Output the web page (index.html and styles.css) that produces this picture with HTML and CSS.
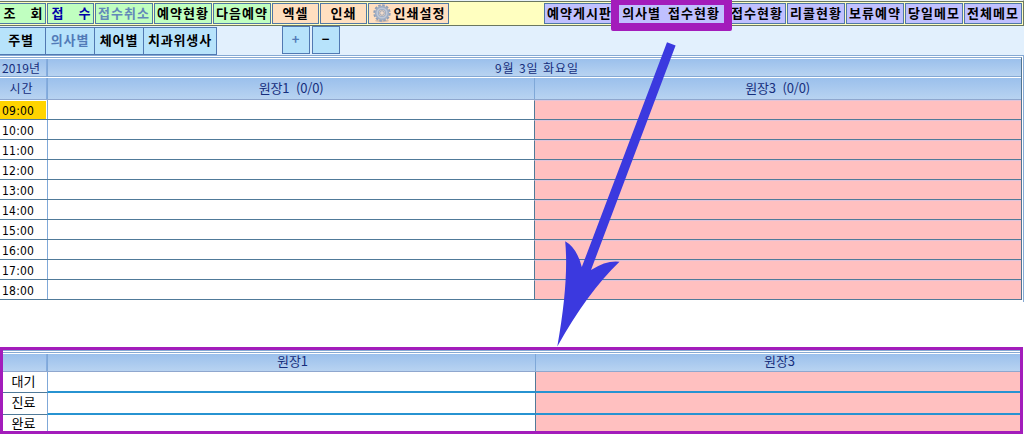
FILE: index.html
```html
<!DOCTYPE html>
<html lang="ko">
<head>
<meta charset="utf-8">
<title>예약현황</title>
<link rel="stylesheet" href="styles.css">
</head>
<body>
<div class="page">
  <header class="toolbar">
    <button class="btn green first">조<span class="gap"></span>회</button>
    <button class="btn green navy w47">접<span class="gap"></span>수</button>
    <button class="btn green muted">접수취소</button>
    <button class="btn green">예약현황</button>
    <button class="btn green">다음예약</button>
    <button class="btn peach w47">엑셀</button>
    <button class="btn peach w47">인쇄</button>
    <button class="btn peach setup">
      <svg class="gear" viewBox="0 0 20 20">
        <ellipse cx="10" cy="17.8" rx="7" ry="1.5" fill="#b9a59b" opacity=".6"/>
        <circle cx="10" cy="10" r="7.4" fill="none" stroke="#91a0b8" stroke-width="2.6" stroke-dasharray="2.5 1.37"/>
        <circle cx="10" cy="10" r="5.1" fill="none" stroke="#a0aec4" stroke-width="4.2"/>
        <circle cx="10" cy="10" r="4.8" fill="none" stroke="#c0c9d7" stroke-width="1.6"/>
        <circle cx="10" cy="10" r="2.3" fill="#f0dccd" stroke="#8998b0" stroke-width=".8"/>
      </svg>인쇄설정</button>
    <span class="spacer"></span>
    <button class="btn violet board">예약게시판</button>
    <button class="btn violet doctor">의사별<span class="space"></span>접수현황</button>
    <button class="btn violet">접수현황</button>
    <button class="btn violet">리콜현황</button>
    <button class="btn violet">보류예약</button>
    <button class="btn violet">당일메모</button>
    <button class="btn violet">전체메모</button>
  </header>
  <nav class="tabs">
    <button class="tab week">주별</button>
    <button class="tab muted">의사별</button>
    <button class="tab">체어별</button>
    <button class="tab hygienist">치과위생사</button>
    <button class="step plus">+</button>
    <button class="step">−</button>
  </nav>
  <main class="schedule">
    <div class="frame">
      <div class="row date"><div class="c1">2019년</div><div class="day">9월 3일 화요일</div></div>
      <div class="row names"><div class="c1">시간</div><div class="c2">원장1&nbsp; (0/0)</div><div class="c3">원장3&nbsp; (0/0)</div></div>
      <div class="row slot"><div class="c1 now">09:00</div><div class="c2"></div><div class="c3"></div></div>
      <div class="row slot"><div class="c1">10:00</div><div class="c2"></div><div class="c3"></div></div>
      <div class="row slot"><div class="c1">11:00</div><div class="c2"></div><div class="c3"></div></div>
      <div class="row slot"><div class="c1">12:00</div><div class="c2"></div><div class="c3"></div></div>
      <div class="row slot"><div class="c1">13:00</div><div class="c2"></div><div class="c3"></div></div>
      <div class="row slot"><div class="c1">14:00</div><div class="c2"></div><div class="c3"></div></div>
      <div class="row slot"><div class="c1">15:00</div><div class="c2"></div><div class="c3"></div></div>
      <div class="row slot"><div class="c1">16:00</div><div class="c2"></div><div class="c3"></div></div>
      <div class="row slot"><div class="c1">17:00</div><div class="c2"></div><div class="c3"></div></div>
      <div class="row slot"><div class="c1">18:00</div><div class="c2"></div><div class="c3"></div></div>
    </div>
  </main>
  <section class="status">
    <div class="srow head"><div class="s1"></div><div class="s2">원장1</div><div class="s3">원장3</div></div>
    <div class="srow wait"><div class="s1">대기</div><div class="s2"></div><div class="s3"></div></div>
    <div class="srow care"><div class="s1">진료</div><div class="s2"></div><div class="s3"></div></div>
    <div class="srow done"><div class="s1">완료</div><div class="s2"></div><div class="s3"></div></div>
  </section>
  <div class="highlight"></div>
  <svg class="arrow" viewBox="0 0 1024 434">
    <path fill="#3b39df" d="M667 42.3 L675.6 45.6 L591 270 Q607 260 619.5 261.8 Q587 293 557.3 346.5 Q569 281 565.2 241.3 Q577 248 581.8 267 Z"/>
  </svg>
</div>
</body>
</html>
```

FILE: styles.css
```css
* { box-sizing: border-box; }
body { margin: 0; background: #fff; }
button { appearance: none; margin: 0; padding: 0; border-radius: 0; font: inherit; color: inherit; }
.page {
  position: relative;
  width: 1024px;
  height: 434px;
  overflow: hidden;
  font: 12px/18px "Noto Sans CJK KR", sans-serif;
  color: #000;
}

.toolbar {
  display: flex;
  gap: 1px;
  height: 26px;
  padding-top: 1px;
  padding-right: 1px;
  border-top: 1px solid #e8f2fa;
  border-right: 1px solid #6b7760;
  background: linear-gradient(#6b7760 0 1px, #ffffc0 1px 24px, #6b7760 24px);
  font: bold 13px/17px "Noto Sans CJK KR", sans-serif;
}
.btn {
  display: flex;
  justify-content: center;
  align-items: center;
  width: 58px;
  height: 21px;
  margin-top: 1px;
  padding-bottom: 3px;
  border: 1px solid #5078a4;
  letter-spacing: 1px;
  white-space: nowrap;
  flex: none;
}
.green { background: #c0ffc0; }
.peach { background: #ffdfc0; }
.violet { background: #c0c0ff; }
.first { width: 46px; border-left: 0; padding-left: 2px; }
.w47 { width: 47px; }
.navy { color: #0000a8; padding-left: 2px; }
.muted { color: #6389b9; }
.gap { width: 14px; }
.space { width: 7px; }
.setup { width: 81px; }
.gear { width: 20px; height: 20px; margin: 2px 2px 0 0; flex: none; }
.spacer { flex: 1; }
.board { width: 71px; }
.doctor { width: 111px; padding-right: 1px; }

.tabs {
  display: flex;
  height: 29px;
  padding-top: 1px;
  background: #e2f0fd;
  font: bold 13px/17px "Noto Sans CJK KR", sans-serif;
}
.tab, .step {
  display: flex;
  justify-content: center;
  align-items: center;
  width: 50px;
  height: 28px;
  margin-right: -1px;
  padding-bottom: 3px;
  border: 1px solid #5179b2;
  background: #b7e3fb;
  letter-spacing: 0.8px;
}
.tab.muted { color: #527bb8; }
.week { width: 46px; border-left: 0; padding-right: 3px; }
.hygienist { width: 74px; }
.step { width: 28px; margin: -1px 2px 0 0; }
.plus { margin-left: 66px; color: #527bb8; }

.schedule {
  height: 247px;
  border-top: 1px solid #86a9d3;
  border-right: 1px solid #86a9d3;
  padding: 1px 1px 0 0;
}
.frame { border-top: 1px solid #86a9d3; border-right: 1px solid #527491; }
.row { display: grid; grid-template-columns: 47px 487px 487px; grid-template-rows: 100%; }
.row > div { text-align: center; white-space: pre; }
.row > div + div { border-left: 1px solid #7fa8d8; }
.date { height: 19px; border-top: 1px solid #fff; border-bottom: 1px solid #86a9d3; background: linear-gradient(#9bc0ec, #b8d3f1); color: #162e7c; line-height: 17px; }
.date .day { grid-column: 2 / 4; letter-spacing: 1px; padding-left: 5px; }
.date .c1 { text-align: left; text-indent: 2px; letter-spacing: .1px; }
.names { height: 23px; border-top: 1px solid #fff; border-bottom: 1px solid #8fa7ce; background: linear-gradient(#9bc0ec, #b8d3f1); line-height: 20px; color: #162e7c; }
.date .c1, .names .c1 { border-right: 1px solid #86ade0; }
.names .c1 { letter-spacing: 1px; padding-right: 3px; }
.names .c2, .names .c3 { font-size: 13px; letter-spacing: -.2px; }
.names .c3 { padding-right: 1px; }
.slot { height: 20px; border-bottom: 1px solid #507a99; }
.slot .c1 { font: 12px/22px "DejaVu Sans Condensed", "DejaVu Sans", sans-serif; letter-spacing: .2px; text-align: left; padding-left: 2px; }
.slot .now { background: #ffd400; height: 18px; margin-right: 1px; margin-top: 1px; line-height: 20px; }
.slot .c3 { background: #ffc0c0; border-top: 1px solid #e0c4da; border-left-color: #507a99; }

.status {
  width: 1023px;
  height: 87px;
  margin-top: 45px;
  padding-top: 4px;
  border: 3px solid #a31cbb;
  background: linear-gradient(#86a9d3 0 1px, #fff 1px 2px, #86a9d3 2px 3px, #fff 3px);
}
.srow { display: grid; grid-template-columns: 44px 488px 485px; grid-template-rows: 100%; }
.srow > div { text-align: center; }
.srow > div + div { border-left: 1px solid #7fa8d8; }
.head { height: 18px; background: linear-gradient(#9bc0ec, #b8d3f1); border-bottom: 1px solid #8fa7ce; color: #162e7c; font-size: 13px; line-height: 14px; }
.head .s1 { border-right: 1px solid #86ade0; }
.head .s2 { padding-left: 2px; }
.head .s3 { padding-left: 3px; }
.wait { height: 21px; }
.care { height: 22px; }
.done { height: 16px; }
.wait .s1, .care .s1 { border-bottom: 1px solid #507a99; }
.wait .s2, .wait .s3, .care .s2, .care .s3 { border-bottom: 2px solid #2793d1; }
.s1 { font-size: 13px; line-height: 18px; padding-right: 3px; }
.done .s1 { line-height: 16px; }
.srow:not(.head) .s3 { background: #ffc0c0; border-left-color: #507a99; }

.highlight {
  position: absolute;
  left: 611px;
  top: -3px;
  width: 121px;
  height: 34px;
  border: 8px solid #a31cbb;
  border-radius: 2px;
}
.arrow { position: absolute; left: 0; top: 0; width: 1024px; height: 434px; }
```
